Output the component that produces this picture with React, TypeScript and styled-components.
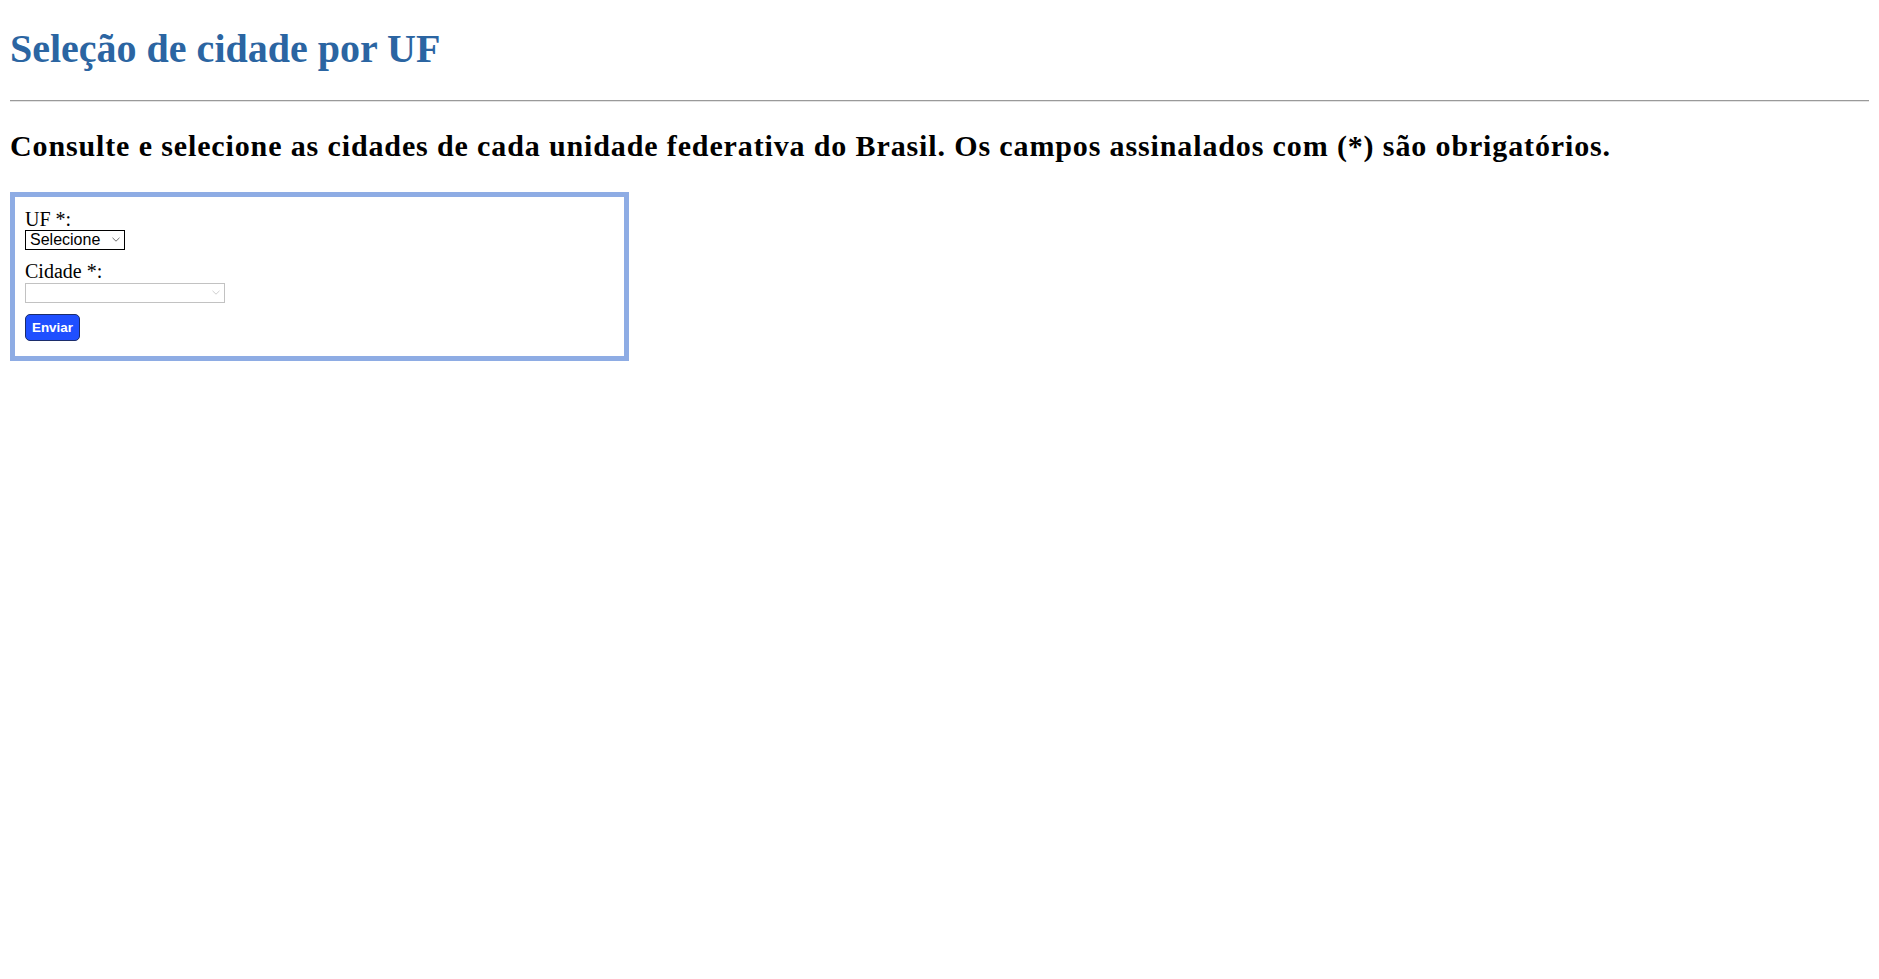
import React from "react";
import styled, { createGlobalStyle } from "styled-components";

const GlobalStyle = createGlobalStyle`
  html, body {
    background: #ffffff;
  }
  body {
    margin: 0 10px;
    color: #000000;
    font-family: "Liberation Serif", "Times New Roman", serif;
  }
`;

const Title = styled.h1`
  margin: 26px 0 28px;
  font-size: 40px;
  line-height: 46px;
  font-weight: bold;
  color: #2b65a2;
`;

const Rule = styled.div`
  height: 0;
  margin: 0 -6px 0 -6px;
  border-top: 1px solid #9a9a9a;
  border-bottom: 1px solid #e4e4e4;
`;

const Intro = styled.h2`
  margin: 27px 0 28px;
  font-size: 30px;
  line-height: 34.5px;
  font-weight: bold;
  letter-spacing: 0.87px;
`;

const FormBox = styled.form`
  box-sizing: border-box;
  width: 619px;
  display: flex;
  flex-direction: column;
  align-items: flex-start;
  padding: 13px 10px 15px;
  border: 5px solid #8eace4;
`;

const Label = styled.label<{ $gapTop?: number }>`
  display: block;
  margin: ${(p) => p.$gapTop ?? 0}px 0 1.5px;
  font-size: 20px;
  line-height: 19px;
`;

const SelectWrap = styled.div<{ $width: number }>`
  position: relative;
  width: ${(p) => p.$width}px;
  height: 20px;
`;

const Select = styled.select<{ $disabled?: boolean }>`
  appearance: none;
  box-sizing: border-box;
  width: 100%;
  height: 100%;
  margin: 0;
  padding: 0 0 0 4px;
  border: 1px solid ${(p) => (p.$disabled ? "#a9a9a9" : "#000000")};
  border-radius: 0;
  background: #ffffff;
  color: #000000;
  font-family: "Liberation Sans", Arial, sans-serif;
  font-size: 16px;
  line-height: 18px;
  outline: none;
`;

const Chevron = styled.svg<{ $muted?: boolean }>`
  position: absolute;
  right: 5px;
  top: 7px;
  width: 8px;
  height: 5px;
  pointer-events: none;
  stroke: ${(p) => (p.$muted ? "#cfcfcf" : "#6d6d6d")};
`;

const SubmitButton = styled.button`
  box-sizing: border-box;
  height: 27px;
  margin-top: 11px;
  padding: 0 6px;
  border: 1px solid #1c2d6b;
  border-radius: 5px;
  background: #1f4fff;
  color: #ffffff;
  font-family: "Liberation Sans", Arial, sans-serif;
  font-size: 13.4px;
  font-weight: bold;
  cursor: pointer;
`;

const Arrow = ({ muted }: { muted?: boolean }) => (
  <Chevron $muted={muted} viewBox="0 0 8 5" fill="none" strokeWidth="1">
    <path d="M0.5 0.8 L4 4.2 L7.5 0.8" />
  </Chevron>
);

const App = () => {
  return (
    <>
      <GlobalStyle />
      <Title>Seleção de cidade por UF</Title>
      <Rule role="separator" />
      <Intro>
        Consulte e selecione as cidades de cada unidade federativa do Brasil.
        Os campos assinalados com (*) são obrigatórios.
      </Intro>
      <FormBox onSubmit={(e) => e.preventDefault()}>
        <Label htmlFor="uf">UF *:</Label>
        <SelectWrap $width={100}>
          <Select id="uf" defaultValue="">
            <option value="">Selecione</option>
          </Select>
          <Arrow />
        </SelectWrap>
        <Label htmlFor="cidade" $gapTop={12}>
          Cidade *:
        </Label>
        <SelectWrap $width={200}>
          <Select id="cidade" $disabled disabled>
            <option value=""></option>
          </Select>
          <Arrow muted />
        </SelectWrap>
        <SubmitButton type="submit">Enviar</SubmitButton>
      </FormBox>
    </>
  );
};

export default App;
